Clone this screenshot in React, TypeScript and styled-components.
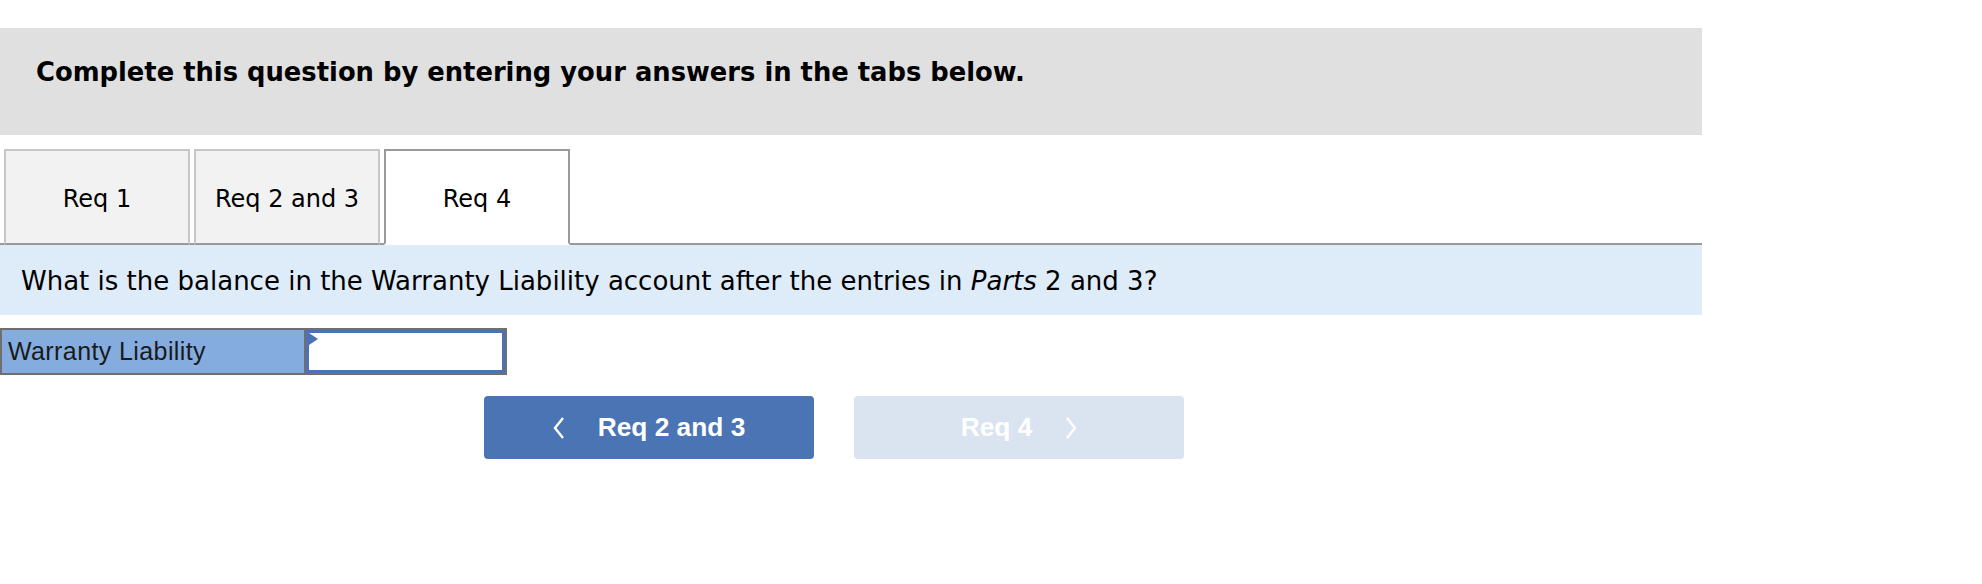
import React, { useState } from "react";
import styled, { createGlobalStyle } from "styled-components";

const GlobalStyle = createGlobalStyle`
  body {
    margin: 0;
    background: #ffffff;
    font-family: "DejaVu Sans", Verdana, sans-serif;
  }
`;

const Page = styled.div`
  width: 1702px;
  padding-top: 28px;
`;

const Banner = styled.div`
  height: 107px;
  background: #e0e0e0;
  display: flex;
  align-items: center;
  padding: 0 0 20px 36px;
  box-sizing: border-box;
`;

const Heading = styled.h2`
  margin: 0;
  font-size: 25.8px;
  font-weight: 700;
  color: #000;
`;

const TabRow = styled.div`
  display: flex;
  gap: 4px;
  margin-top: 14px;
  padding-left: 4px;
  border-bottom: 2px solid #999999;
`;

const Tab = styled.button<{ $active?: boolean }>`
  width: 186px;
  height: 96px;
  margin-bottom: -2px;
  box-sizing: border-box;
  font-family: "DejaVu Sans", Verdana, sans-serif;
  font-size: 24px;
  color: #000;
  padding: 4px 0 0;
  cursor: pointer;
  background: ${(p) => (p.$active ? "#ffffff" : "#f2f2f2")};
  border: 2px solid ${(p) => (p.$active ? "#999999" : "#c6c6c6")};
  border-bottom: ${(p) => (p.$active ? "2px solid #ffffff" : "2px solid #999999")};
`;

const Question = styled.div`
  height: 70px;
  background: #deebf8;
  display: flex;
  align-items: center;
  padding-left: 21px;
  padding-top: 2px;
  box-sizing: border-box;
  font-size: 26px;
  color: #000;
`;

const AnswerTable = styled.div`
  display: flex;
  width: 507px;
  height: 47px;
  margin-top: 13px;
  border: 2px solid #6f6f6f;
  box-sizing: border-box;
`;

const LabelCell = styled.div`
  flex: none;
  width: 304px;
  background: #84acdf;
  border-right: 2px solid #6f6f6f;
  display: flex;
  align-items: center;
  padding-left: 6px;
  box-sizing: border-box;
  white-space: nowrap;
  font-family: "Liberation Sans", Arial, sans-serif;
  font-size: 25px;
  letter-spacing: 0.4px;
  color: #1a1a1a;
`;

const InputCell = styled.div`
  position: relative;
  flex: 1;
  min-width: 0;
  display: flex;
  background: #ffffff;
`;

const AmountInput = styled.input`
  flex: 1;
  min-width: 0;
  width: 100%;
  margin: 0;
  border: 3px solid #4a72b5;
  outline: none;
  font-family: "Liberation Sans", Arial, sans-serif;
  font-size: 22px;
  text-align: right;
  padding: 0 6px;
`;

const Flag = styled.span`
  position: absolute;
  left: 3px;
  top: 3px;
  width: 0;
  height: 0;
  border-top: 6px solid transparent;
  border-bottom: 6px solid transparent;
  border-left: 9px solid #4a72b5;
`;

const NavRow = styled.div`
  display: flex;
  gap: 40px;
  margin-top: 21px;
  padding-left: 484px;
`;

const NavButton = styled.button<{ $disabled?: boolean }>`
  width: 330px;
  height: 63px;
  border: none;
  border-radius: 4px;
  background: ${(p) => (p.$disabled ? "#d9e4f0" : "#4a74b3")};
  color: #ffffff;
  display: flex;
  align-items: center;
  justify-content: center;
  gap: 33px;
  font-family: "Liberation Sans", Arial, sans-serif;
  font-size: 26.3px;
  font-weight: 700;
  cursor: ${(p) => (p.$disabled ? "default" : "pointer")};
`;

const Chevron = ({ dir }: { dir: "left" | "right" }) => (
  <svg width="12" height="24" viewBox="0 0 12 24">
    <polyline
      points={dir === "left" ? "10,2 2,12 10,22" : "2,2 10,12 2,22"}
      fill="none"
      stroke="#ffffff"
      strokeWidth="2.4"
    />
  </svg>
);

const tabs = ["Req 1", "Req 2 and 3", "Req 4"];

const App = () => {
  const [active, setActive] = useState(2);
  const [amount, setAmount] = useState("");

  return (
    <>
      <GlobalStyle />
      <Page>
        <Banner>
          <Heading>Complete this question by entering your answers in the tabs below.</Heading>
        </Banner>
        <TabRow>
          {tabs.map((t, i) => (
            <Tab key={t} $active={i === active} onClick={() => setActive(i)}>
              {t}
            </Tab>
          ))}
        </TabRow>
        <Question>
          <span>
            What is the balance in the Warranty Liability account after the entries in <i>Parts</i> 2 and 3?
          </span>
        </Question>
        <AnswerTable>
          <LabelCell>Warranty Liability</LabelCell>
          <InputCell>
            <AmountInput value={amount} onChange={(e) => setAmount(e.target.value)} />
            <Flag />
          </InputCell>
        </AnswerTable>
        <NavRow>
          <NavButton onClick={() => setActive(1)}>
            <Chevron dir="left" />
            <span>Req 2 and 3</span>
          </NavButton>
          <NavButton $disabled>
            <span>Req 4</span>
            <Chevron dir="right" />
          </NavButton>
        </NavRow>
      </Page>
    </>
  );
};

export default App;
